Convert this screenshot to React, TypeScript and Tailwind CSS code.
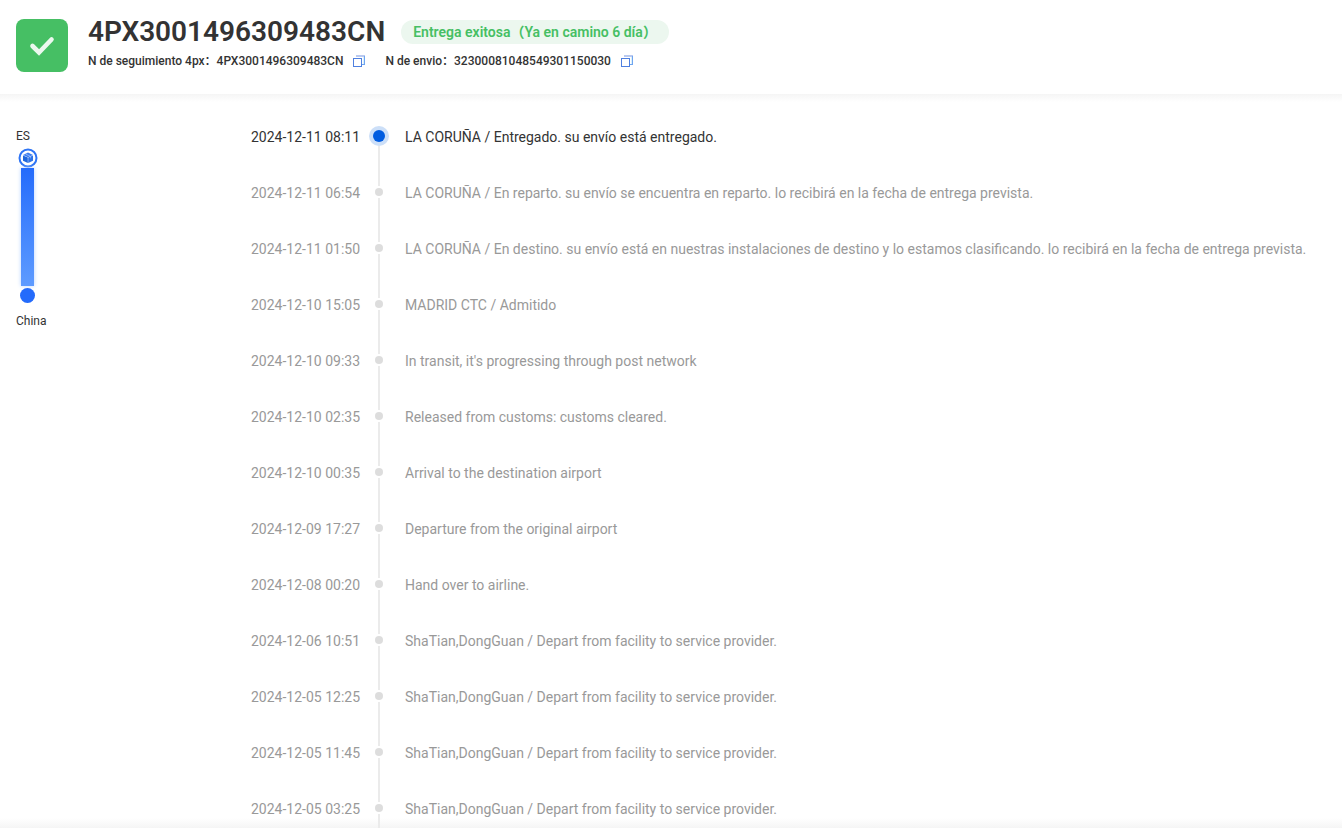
import { useState } from 'react';
import clsx from 'clsx';

interface TrackEvent {
  date: string;
  text: string;
}

const trackingNumber = '4PX3001496309483CN';
const shippingNumber = '32300081048549301150030';

const events: TrackEvent[] = [
  { date: '2024-12-11 08:11', text: 'LA CORUÑA / Entregado. su envío está entregado.' },
  { date: '2024-12-11 06:54', text: 'LA CORUÑA / En reparto. su envío se encuentra en reparto. lo recibirá en la fecha de entrega prevista.' },
  { date: '2024-12-11 01:50', text: 'LA CORUÑA / En destino. su envío está en nuestras instalaciones de destino y lo estamos clasificando. lo recibirá en la fecha de entrega prevista.' },
  { date: '2024-12-10 15:05', text: 'MADRID CTC / Admitido' },
  { date: '2024-12-10 09:33', text: "In transit, it's progressing through post network" },
  { date: '2024-12-10 02:35', text: 'Released from customs: customs cleared.' },
  { date: '2024-12-10 00:35', text: 'Arrival to the destination airport' },
  { date: '2024-12-09 17:27', text: 'Departure from the original airport' },
  { date: '2024-12-08 00:20', text: 'Hand over to airline.' },
  { date: '2024-12-06 10:51', text: 'ShaTian,DongGuan / Depart from facility to service provider.' },
  { date: '2024-12-05 12:25', text: 'ShaTian,DongGuan / Depart from facility to service provider.' },
  { date: '2024-12-05 11:45', text: 'ShaTian,DongGuan / Depart from facility to service provider.' },
  { date: '2024-12-05 03:25', text: 'ShaTian,DongGuan / Depart from facility to service provider.' },
];

function CopyButton({ value }: { value: string }) {
  const [copied, setCopied] = useState(false);

  const handleCopy = async () => {
    await navigator.clipboard.writeText(value);
    setCopied(true);
  };

  return (
    <button
      type="button"
      aria-label={copied ? 'Copiado' : 'Copiar'}
      onClick={handleCopy}
      className="cursor-pointer"
    >
      <svg width="12" height="12" viewBox="0 0 12 12" fill="none" shapeRendering="crispEdges">
        <rect x="3" width="9" height="2" fill="#b9c9f0" />
        <path d="M10.500 2V9.500H9" stroke="#d9f0fb" />
        <path d="M11.500 1V9.500H9" stroke="#6fa5f0" />
        <rect x="0.500" y="3.500" width="8" height="8" fill="#fff" stroke="#4f80e0" />
      </svg>
    </button>
  );
}

function Header() {
  return (
    <header className="flex items-start gap-5 px-4 pt-4 pb-[22px]">
      <svg className="mt-[3px] shrink-0" width="52" height="53" viewBox="0 0 52 53" fill="none">
        <rect width="52" height="53" rx="8" fill="#46bf64" />
        <path d="M16.500 27L23 33.500L35.500 20.500" stroke="#ecf8ef" strokeWidth="4.600" strokeLinecap="round" />
      </svg>
      <div>
        <div className="flex items-center gap-4">
          <h1 className="text-[28px] leading-8 font-semibold text-[#333]">{trackingNumber}</h1>
          <span className="h-6 rounded-full bg-[#ecf7ef] px-3 text-sm leading-6 font-semibold text-[#46bf64]">
            Entrega exitosa（Ya en camino 6 día）
          </span>
        </div>
        <div className="mt-1 flex text-xs leading-[18px] font-medium text-[#333]">
          <div className="flex items-center">
            <span>N de seguimiento 4px：</span>
            <span className="mr-2.5">{trackingNumber}</span>
            <CopyButton value={trackingNumber} />
          </div>
          <div className="ml-5 flex items-center">
            <span>N de envio：</span>
            <span className="mr-2.5">{shippingNumber}</span>
            <CopyButton value={shippingNumber} />
          </div>
        </div>
      </div>
    </header>
  );
}

function Route() {
  return (
    <aside className="w-[251px] shrink-0 pt-px pl-4 text-xs leading-4 text-[#333]">
      <p>ES</p>
      <div className="mt-1 flex w-[23px] flex-col items-center">
        <svg width="20" height="20" viewBox="0 0 20 20" fill="none">
          <circle cx="10" cy="10" r="8.500" fill="#fff" stroke="#2e74f5" strokeWidth="2" />
          <path d="M10 4.500L15 7L10 9.300L5 7Z" fill="#3d7df0" />
          <path d="M5 7.400L9.800 9.600V15L5 12.700Z" fill="#1f66dc" />
          <path d="M15 7.400L10.200 9.600V15L15 12.700Z" fill="#2f73e6" />
          <path d="M7.500 6L12.300 8.200V10.300" stroke="#a8c8ff" strokeWidth="0.700" />
        </svg>
        <div className="h-[118px] w-[13px] bg-linear-to-b from-[#246bfb] to-[#5e9bff] shadow-[0_0_4px_#b9d3ff]" />
        <div className="mt-0.5 size-[15px] rounded-full bg-[#246bfb]" />
      </div>
      <p className="mt-2.5">China</p>
    </aside>
  );
}

function Timeline() {
  return (
    <ol className="min-w-0 flex-1 text-sm leading-5">
      {events.map((event, index) => {
        const isLatest = index === 0;
        const isLast = index === events.length - 1;
        return (
          <li
            key={event.date}
            className={clsx('flex', isLatest ? 'text-[#333]' : 'text-[#999]', isLast ? 'h-[29px]' : 'h-14')}
          >
            <time className="w-[118px] shrink-0">{event.date}</time>
            <div className="flex w-5 shrink-0 flex-col items-center">
              {isLatest ? (
                <span className="-mt-px flex size-5 shrink-0 items-center justify-center rounded-full bg-[#ccdff8]">
                  <span className="size-3 rounded-full bg-[#005ce0]" />
                </span>
              ) : (
                <span className="mt-[5px] mb-0.5 size-2 shrink-0 rounded-full bg-[#ddd]" />
              )}
              <span className={clsx('w-0.5 flex-1 bg-[#ebebeb]', !isLast && '-mb-[3px]')} />
            </div>
            <p className="pl-4">{event.text}</p>
          </li>
        );
      })}
    </ol>
  );
}

export default function App() {
  return (
    <div className="bg-white font-[Roboto,'Noto_Sans_CJK_SC',sans-serif]">
      <Header />
      <div className="h-2 bg-linear-to-b from-[#f5f5f5] to-white" />
      <main className="flex bg-linear-to-t from-[#f5f5f5] to-white bg-[length:100%_10px] bg-bottom bg-no-repeat pt-[25px]">
        <Route />
        <Timeline />
      </main>
    </div>
  );
}
